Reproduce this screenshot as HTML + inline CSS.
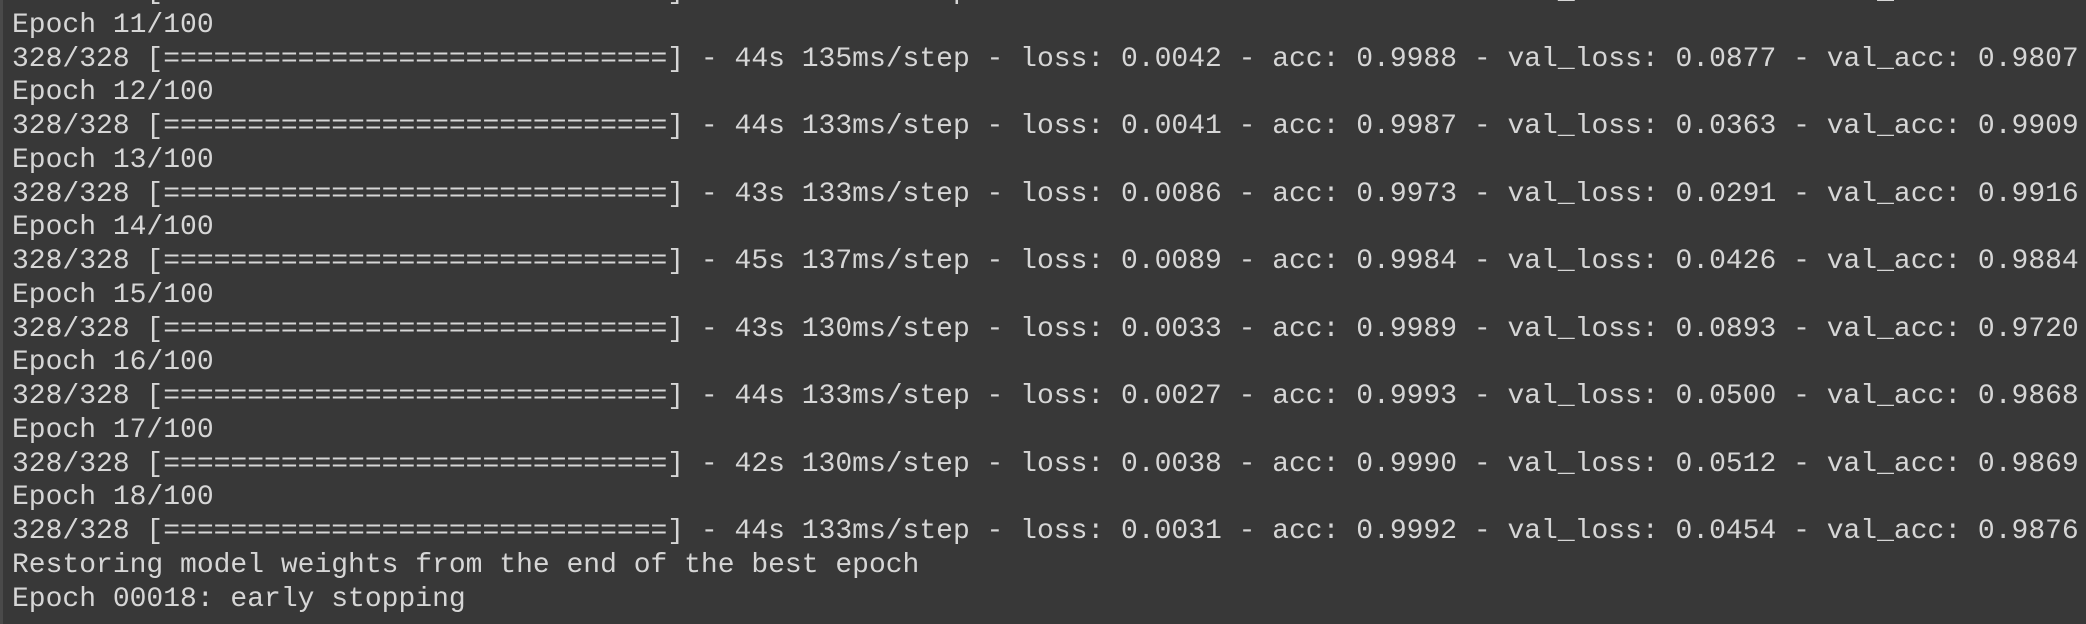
<!DOCTYPE html>
<html><head><meta charset="utf-8"><style>
html,body{margin:0;padding:0;width:2086px;height:624px;overflow:hidden;background:#383838;}
.b{position:absolute;left:0;top:0;width:3px;height:624px;background:#4a4a4a;}
pre{position:absolute;left:12px;top:-25px;margin:0;font-family:"Liberation Mono",monospace;font-size:28px;line-height:33.76px;color:#d6d6d6;white-space:pre;}
</style></head><body><div class="b"></div><pre>328/328 [==============================] - 44s 134ms/step - loss: 0.0052 - acc: 0.9985 - val_loss: 0.0412 - val_acc: 0.9880
Epoch 11/100
328/328 [==============================] - 44s 135ms/step - loss: 0.0042 - acc: 0.9988 - val_loss: 0.0877 - val_acc: 0.9807
Epoch 12/100
328/328 [==============================] - 44s 133ms/step - loss: 0.0041 - acc: 0.9987 - val_loss: 0.0363 - val_acc: 0.9909
Epoch 13/100
328/328 [==============================] - 43s 133ms/step - loss: 0.0086 - acc: 0.9973 - val_loss: 0.0291 - val_acc: 0.9916
Epoch 14/100
328/328 [==============================] - 45s 137ms/step - loss: 0.0089 - acc: 0.9984 - val_loss: 0.0426 - val_acc: 0.9884
Epoch 15/100
328/328 [==============================] - 43s 130ms/step - loss: 0.0033 - acc: 0.9989 - val_loss: 0.0893 - val_acc: 0.9720
Epoch 16/100
328/328 [==============================] - 44s 133ms/step - loss: 0.0027 - acc: 0.9993 - val_loss: 0.0500 - val_acc: 0.9868
Epoch 17/100
328/328 [==============================] - 42s 130ms/step - loss: 0.0038 - acc: 0.9990 - val_loss: 0.0512 - val_acc: 0.9869
Epoch 18/100
328/328 [==============================] - 44s 133ms/step - loss: 0.0031 - acc: 0.9992 - val_loss: 0.0454 - val_acc: 0.9876
Restoring model weights from the end of the best epoch
Epoch 00018: early stopping</pre></body></html>
